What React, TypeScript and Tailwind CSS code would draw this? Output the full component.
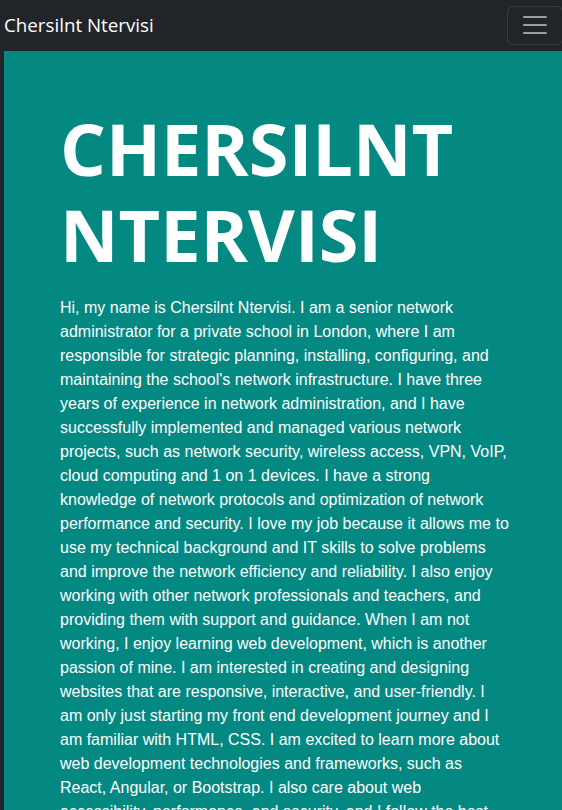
export default function App() {
  const text =
    "Hi, my name is Chersilnt Ntervisi. I am a senior network administrator for a private school in London, where I am responsible for strategic planning, installing, configuring, and maintaining the school's network infrastructure. I have three years of experience in network administration, and I have successfully implemented and managed various network projects, such as network security, wireless access, VPN, VoIP, cloud computing and 1 on 1 devices. I have a strong knowledge of network protocols and optimization of network performance and security. I love my job because it allows me to use my technical background and IT skills to solve problems and improve the network efficiency and reliability. I also enjoy working with other network professionals and teachers, and providing them with support and guidance. When I am not working, I enjoy learning web development, which is another passion of mine. I am interested in creating and designing websites that are responsive, interactive, and user-friendly. I am only just starting my front end development journey and I am familiar with HTML, CSS. I am excited to learn more about web development technologies and frameworks, such as React, Angular, or Bootstrap. I also care about web accessibility, performance, and security, and I follow the best practices and standards to ensure that my websites are accessible to everyone.";
  return (
    <div className="w-[562px] h-[810px] overflow-hidden bg-[#212529]">
      <div className="ml-1 w-[562px]">
        <nav className="h-[51px] flex items-center justify-between">
          <span className="text-white text-[18.75px] font-['Open_Sans',sans-serif] leading-none">
            Chersilnt Ntervisi
          </span>
          <button className="mr-[3px] mb-[1px] h-[39px] w-[56px] rounded-md border border-white/10 flex items-center justify-center">
            <svg width="30" height="30" viewBox="0 0 30 30">
              <path
                d="M4 7h22M4 15h22M4 23h22"
                stroke="rgba(255,255,255,0.55)"
                strokeWidth="2"
                strokeLinecap="round"
              />
            </svg>
          </button>
        </nav>
        <section className="bg-[#038981] px-14 pt-[54px] pb-12 min-h-[760px]">
          <h1 className="text-white font-bold uppercase text-[72px] leading-[1.2] font-['Open_Sans',sans-serif]">
            Chersilnt Ntervisi
          </h1>
          <p className="mt-[18px] text-white text-[16px] leading-[24px] font-['Liberation_Sans',Arial,sans-serif]">
            {text}
          </p>
        </section>
      </div>
    </div>
  );
}
